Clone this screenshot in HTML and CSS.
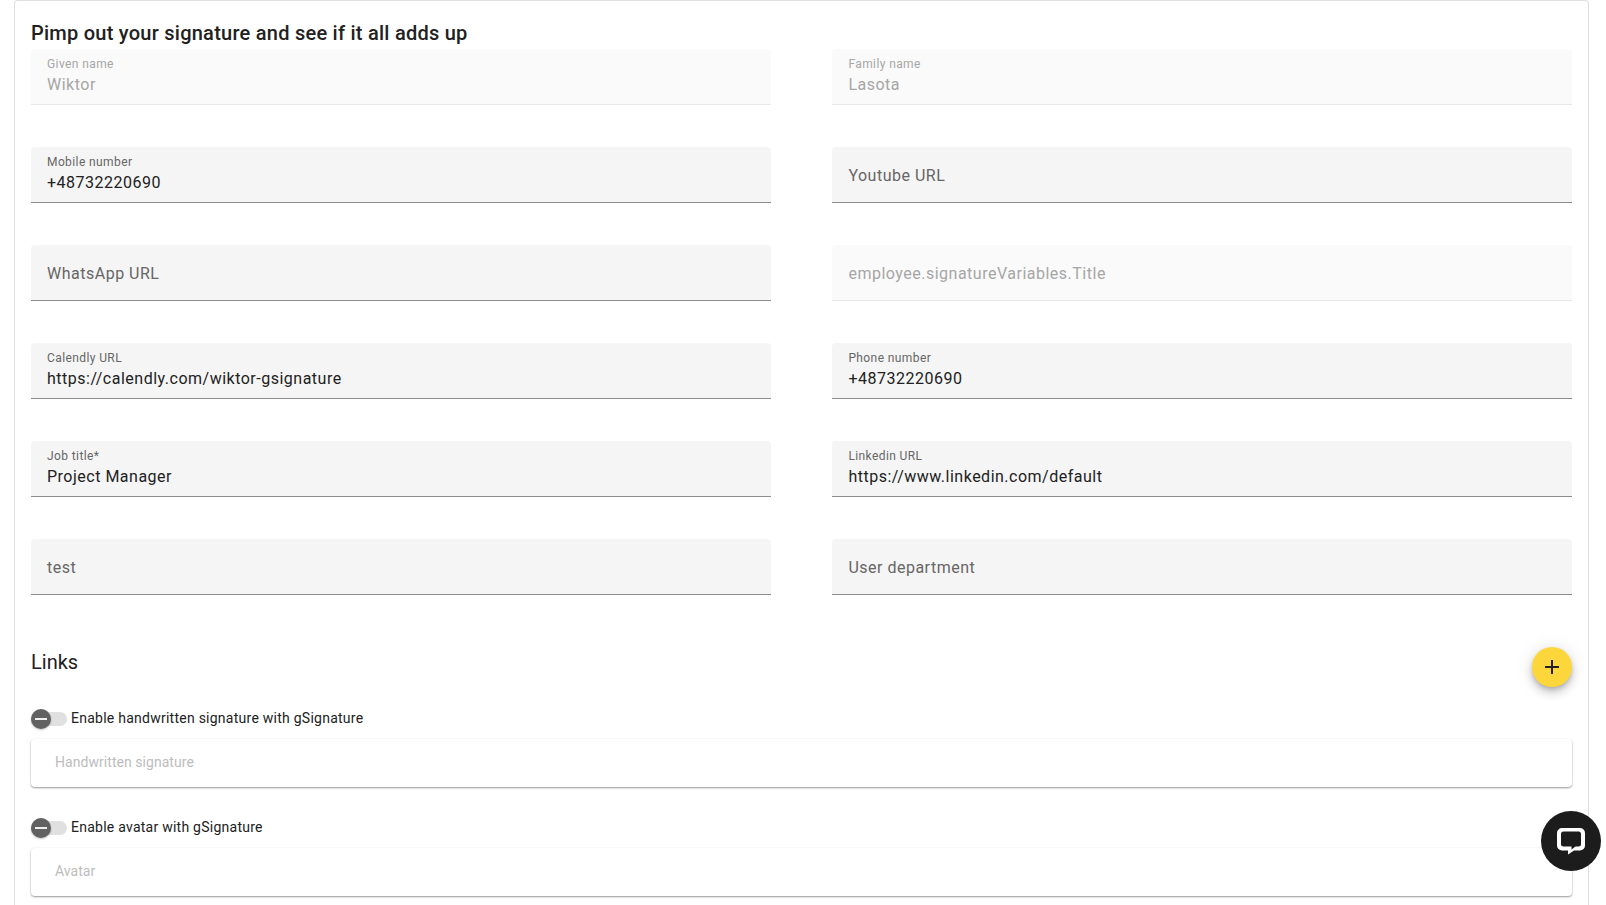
FILE: index.html
```html
<!DOCTYPE html>
<html lang="en">
<head>
<meta charset="utf-8">
<title>Signature</title>
<link rel="stylesheet" href="styles.css">
</head>
<body>
<main class="card">
  <h2 class="title">Pimp out your signature and see if it all adds up</h2>
  <div class="grid">
    <div class="field disabled"><span class="label">Given name</span><span class="value">Wiktor</span></div>
    <div class="field disabled"><span class="label">Family name</span><span class="value">Lasota</span></div>
    <div class="field"><span class="label">Mobile number</span><span class="value">+48732220690</span></div>
    <div class="field empty"><span class="placeholder">Youtube URL</span></div>
    <div class="field empty"><span class="placeholder">WhatsApp URL</span></div>
    <div class="field empty disabled"><span class="placeholder">employee.signatureVariables.Title</span></div>
    <div class="field"><span class="label">Calendly URL</span><span class="value">https://calendly.com/wiktor-gsignature</span></div>
    <div class="field"><span class="label">Phone number</span><span class="value">+48732220690</span></div>
    <div class="field"><span class="label">Job title*</span><span class="value">Project Manager</span></div>
    <div class="field"><span class="label">Linkedin URL</span><span class="value">https://www.linkedin.com/default</span></div>
    <div class="field empty"><span class="placeholder">test</span></div>
    <div class="field empty"><span class="placeholder">User department</span></div>
  </div>
  <div class="links-head">
    <h3 class="links-title">Links</h3>
    <button class="fab" type="button" aria-label="Add link">
      <svg width="24" height="24" viewBox="0 0 24 24"><path d="M19 13h-6v6h-2v-6H5v-2h6V5h2v6h6v2z" fill="#212121"/></svg>
    </button>
  </div>
  <section class="upload-block">
    <div class="toggle-row">
      <span class="toggle"><span class="track"></span><span class="thumb"><span class="minus"></span></span></span>
      <span class="toggle-label">Enable handwritten signature with gSignature</span>
    </div>
    <div class="upload">Handwritten signature</div>
  </section>
  <section class="upload-block">
    <div class="toggle-row">
      <span class="toggle"><span class="track"></span><span class="thumb"><span class="minus"></span></span></span>
      <span class="toggle-label">Enable avatar with gSignature</span>
    </div>
    <div class="upload">Avatar</div>
  </section>
</main>
<button class="chat" type="button" aria-label="Chat">
  <svg width="28" height="28" viewBox="0 0 28 28"><path fill-rule="evenodd" d="M5 1h18a5 5 0 0 1 5 5v12.500a5 5 0 0 1-5 5h-6l-6 4v-4H5a5 5 0 0 1-5-5V6a5 5 0 0 1 5-5zM6.500 4.500a2.500 2.500 0 0 0-2.500 2.500v10a2.500 2.500 0 0 0 2.500 2.500H14.500v3l4-3h3a2.500 2.500 0 0 0 2.500-2.500V7a2.500 2.500 0 0 0-2.500-2.500z" fill="#fff"/></svg>
</button>
</body>
</html>
```
FILE: styles.css
```css
* { box-sizing: border-box; }
html, body { margin: 0; height: 905px; overflow: hidden; background: #fff; }
body { font-family: Roboto, "Liberation Sans", sans-serif; color: #212121; }

.card {
  margin-left: 14px;
  width: 1575px;
  height: 905px;
  padding: 0 16px;
  border: 1px solid #e0e0e0;
  border-bottom: 0;
  border-radius: 4px 4px 0 0;
  background: #fff;
}
.title {
  margin: 0;
  padding-top: 20px;
  height: 48px;
  font-size: 20px;
  line-height: 24px;
  font-weight: 500;
  letter-spacing: .25px;
}
.grid {
  display: grid;
  grid-template-columns: 740px 740px;
  column-gap: 61.4px;
  row-gap: 42px;
}
.field {
  display: flex;
  flex-direction: column;
  height: 56px;
  padding: 8px 16px 0;
  background: #f5f5f5;
  border-bottom: 1px solid #8c8c8c;
  border-radius: 4px 4px 0 0;
}
.field.empty { justify-content: center; padding-top: 2px; }
.label {
  font-size: 12px;
  line-height: 14px;
  letter-spacing: .4px;
  color: #666;
}
.value {
  margin-top: 2px;
  font-size: 16px;
  line-height: 24px;
  letter-spacing: .5px;
  color: #212121;
}
.placeholder {
  font-size: 16px;
  line-height: 24px;
  letter-spacing: .5px;
  color: #666;
}
.field.disabled { background: #fafafa; border-bottom-color: #e8e8e8; }
.field.disabled .label,
.field.disabled .value,
.field.disabled .placeholder { color: #a6a6a6; }

.links-head {
  display: flex;
  justify-content: space-between;
  align-items: flex-start;
  height: 114px;
  padding-top: 55px;
}
.links-title {
  margin: 0;
  font-size: 20px;
  line-height: 24px;
  font-weight: 400;
}
.fab {
  display: flex;
  align-items: center;
  justify-content: center;
  width: 40px;
  height: 40px;
  margin-top: -3px;
  padding: 0;
  border: 0;
  border-radius: 50%;
  background: #fdd63c;
  box-shadow: 0 3px 5px -1px rgba(0,0,0,.2), 0 6px 10px 0 rgba(0,0,0,.14), 0 1px 18px 0 rgba(0,0,0,.12);
}
.upload-block { margin-bottom: 31px; }
.toggle-row {
  display: flex;
  align-items: flex-start;
  height: 20px;
  gap: 4px;
}
.toggle {
  position: relative;
  flex: none;
  width: 36px;
  height: 20px;
}
.track {
  position: absolute;
  left: 0;
  top: 3px;
  width: 36px;
  height: 14px;
  border-radius: 7px;
  background: #e0e0e0;
}
.thumb {
  position: absolute;
  left: 0;
  top: 0;
  display: flex;
  align-items: center;
  justify-content: center;
  width: 20px;
  height: 20px;
  border-radius: 50%;
  background: #616161;
  box-shadow: 0 1px 2px rgba(0,0,0,.25);
}
.minus {
  width: 12px;
  height: 2px;
  background: #fff;
  opacity: .9;
}
.toggle-label {
  font-size: 14px;
  line-height: 18px;
  letter-spacing: .25px;
  color: #212121;
}
.upload {
  height: 48px;
  margin-top: 10px;
  padding: 0 24px;
  font-size: 14px;
  line-height: 46px;
  letter-spacing: .05px;
  color: #bdbdbd;
  background: #fff;
  border-radius: 4px;
  box-shadow: 0 1px 2px rgba(0,0,0,.4), 0 0 2px rgba(0,0,0,.03);
}
.chat {
  position: fixed;
  left: 1541px;
  top: 811px;
  display: flex;
  align-items: center;
  justify-content: center;
  width: 60px;
  height: 60px;
  padding: 0;
  border: 0;
  border-radius: 50%;
  background: #1c1c1c;
}
```
